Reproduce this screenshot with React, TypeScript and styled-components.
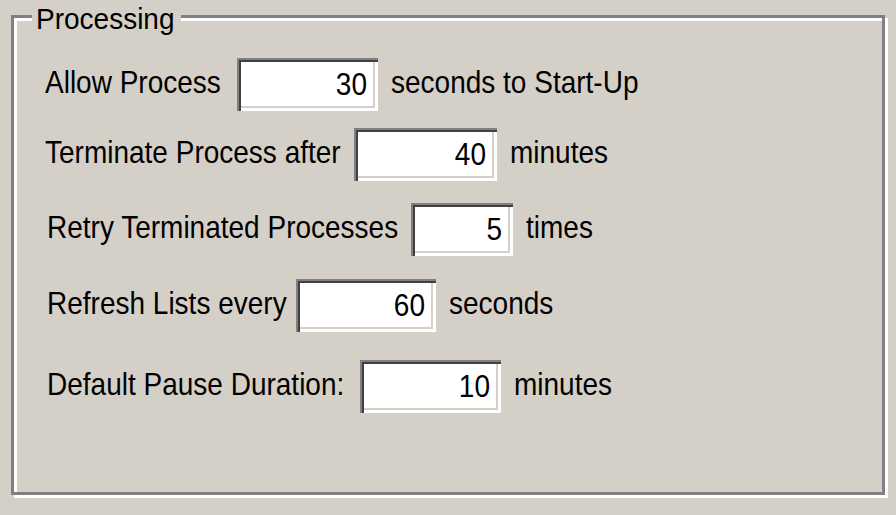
import styled, { createGlobalStyle } from "styled-components";

type Setting = {
  label: string;
  labelWidth: number;
  value: string;
  inputWidth: number;
  unit: string;
  top: number;
  indent: number;
};

const settings: Setting[] = [
  { label: "Allow Process", labelWidth: 192, value: "30", inputWidth: 141, unit: "seconds to Start-Up", top: 0, indent: 0 },
  { label: "Terminate Process after", labelWidth: 309, value: "40", inputWidth: 143, unit: "minutes", top: 17, indent: 0 },
  { label: "Retry Terminated Processes", labelWidth: 366, value: "5", inputWidth: 102, unit: "times", top: 22, indent: 2 },
  { label: "Refresh Lists every", labelWidth: 251, value: "60", inputWidth: 140, unit: "seconds", top: 23, indent: 2 },
  { label: "Default Pause Duration:", labelWidth: 315, value: "10", inputWidth: 141, unit: "minutes", top: 28, indent: 2 },
];

const GlobalStyle = createGlobalStyle`
  html, body {
    margin: 0;
    padding: 0;
    background: #d4d0c8;
  }
  body {
    font-family: "Liberation Sans", Arial, sans-serif;
    color: #000;
  }
`;

const App = () => {
  return (
    <Page>
      <GlobalStyle />
      <GroupBox>
        <Legend>Processing</Legend>
        {settings.map((s) => (
          <Row key={s.label} $top={s.top} $indent={s.indent}>
            <Label $width={s.labelWidth - s.indent}>
              <TallText>{s.label}</TallText>
            </Label>
            <NumberField $width={s.inputWidth}>
              <TallText>{s.value}</TallText>
            </NumberField>
            <Unit>
              <TallText>{s.unit}</TallText>
            </Unit>
          </Row>
        ))}
      </GroupBox>
    </Page>
  );
};

const Page = styled.div`
  width: 896px;
  height: 515px;
  padding: 15px 0 0 11px;
  box-sizing: border-box;
  background: #d4d0c8;
`;

const GroupBox = styled.div`
  position: relative;
  box-sizing: border-box;
  width: 874px;
  height: 480px;
  border: 3px solid #808080;
  box-shadow: inset 3px 3px 0 #fff, 3px 3px 0 #fff;
  padding: 40px 0 0 31px;
  display: flex;
  flex-direction: column;
`;

const TallText = styled.span`
  display: inline-block;
  transform: scaleY(1.1);
  transform-origin: center;
`;

const Legend = styled.div`
  position: absolute;
  top: -15px;
  left: 18px;
  padding: 0 6px 0 4px;
  background: #d4d0c8;
  font-size: 28px;
  line-height: 32px;
  white-space: nowrap;
  transform: scaleY(1.08);
`;

const Row = styled.div<{ $top: number; $indent: number }>`
  display: flex;
  align-items: center;
  height: 53px;
  margin-top: ${(p) => p.$top}px;
  padding-left: ${(p) => p.$indent}px;
`;

const Label = styled.span<{ $width: number }>`
  width: ${(p) => p.$width}px;
  flex-shrink: 0;
  font-size: 28px;
  white-space: nowrap;
  margin-top: -3px;
`;

const NumberField = styled.div<{ $width: number }>`
  width: ${(p) => p.$width}px;
  height: 53px;
  flex-shrink: 0;
  box-sizing: border-box;
  padding: 0 11px 0 0;
  display: flex;
  align-items: center;
  justify-content: flex-end;
  background: #fff;
  font-size: 28px;
  box-shadow: inset 2px 2px 0 #808080, inset 4px 4px 0 #404040,
    inset -3px -3px 0 #fff, inset -5px -5px 0 #d4d0c8;
`;

const Unit = styled.span`
  margin-left: 13px;
  margin-top: -3px;
  font-size: 28px;
  white-space: nowrap;
`;

export default App;
